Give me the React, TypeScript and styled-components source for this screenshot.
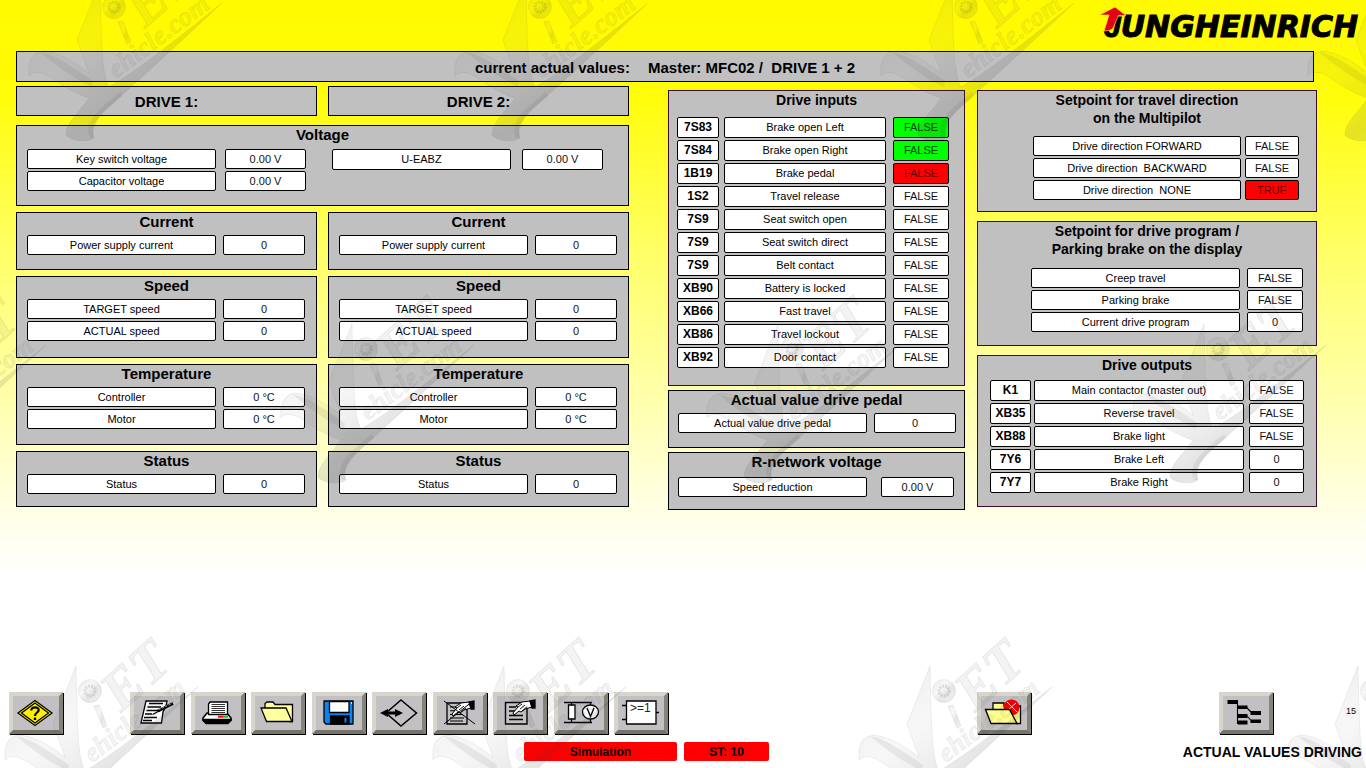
import React from 'react';
import styled, { createGlobalStyle } from 'styled-components';

const GlobalStyle = createGlobalStyle`
  *, *::before, *::after { box-sizing: border-box; }
  body {
    margin: 0;
    color: #000;
    font-family: "Liberation Sans", Arial, sans-serif;
    font-size: 11px;
  }
`;

const Page = styled.div`
  position: relative;
  display: flex;
  flex-direction: column;
  min-height: 100vh;
  overflow: hidden;
  padding-bottom: 7px;
  background: linear-gradient(#fffa00 0%, #fffc08 12%, #ffff70 35%, #ffffb4 54%, #ffffec 68%, #fff 76%);
`;

const Masthead = styled.header`
  display: flex;
  justify-content: flex-end;
  height: 51px;
  padding: 5px 4px 0 0;
`;

const TitleBar = styled.h1`
  display: flex;
  justify-content: center;
  gap: 18px;
  height: 31px;
  margin: 0 52px 4px 16px;
  border: 1px solid #000;
  background: #c0c0c0;
  font-size: 15px;
  line-height: 31px;
  white-space: pre;
`;

const Board = styled.main`
  display: grid;
  grid-template-columns: minmax(0, 641fr) minmax(0, 297fr) minmax(0, 342fr);
  column-gap: 11px;
  align-items: start;
  margin: 0 48px 40px 16px;
`;

const DriveArea = styled.div`
  display: grid;
  grid-template-columns: repeat(2, minmax(0, 1fr));
  gap: 6px 11px;
  padding-right: 28px;
`;

const SideColumn = styled.div<{ $gap: number; $inset?: number }>`
  display: flex;
  flex-direction: column;
  gap: ${(p) => p.$gap}px;
  padding: 4px ${(p) => p.$inset ?? 0}px 0;
`;

const DriveTitle = styled.h2`
  height: 30px;
  margin: 0 0 3px;
  border: 1px solid #000;
  background: #c0c0c0;
  font-size: 15px;
  line-height: 29px;
  text-align: center;
`;

const Panel = styled.section<{ $bottom: number; $wide?: boolean; $tint?: boolean }>`
  grid-column: ${(p) => (p.$wide ? '1 / -1' : 'auto')};
  padding-bottom: ${(p) => p.$bottom}px;
  border: 1px solid ${(p) => (p.$tint ? '#3a0a28' : '#000')};
  background: #c0c0c0;
`;

const PanelTitle = styled.h3<{ $gap: number; $small?: boolean }>`
  margin: 0 0 ${(p) => p.$gap}px;
  font-size: ${(p) => (p.$small ? 14 : 15)}px;
  line-height: 18px;
  text-align: center;
`;

const TablePair = styled.div`
  display: grid;
  grid-template-columns: 10fr 279fr 26fr 271fr 25fr;
  & > :first-child { grid-column: 2; }
  & > :last-child { grid-column: 4; }
`;

const Table = styled.table`
  display: block;
`;

const Body = styled.tbody<{ $gap: number }>`
  display: flex;
  flex-direction: column;
  gap: ${(p) => p.$gap}px;
`;

const Row = styled.tr<{ $columns: string }>`
  display: grid;
  grid-template-columns: ${(p) => p.$columns};
`;

const LabelCell = styled.th<{ $col: number; $h: number; $strong?: boolean }>`
  grid-column: ${(p) => p.$col};
  height: ${(p) => p.$h}px;
  padding: 0;
  border: 1px solid #000;
  border-radius: 2px;
  background: #fff;
  font-size: ${(p) => (p.$strong ? 12 : 11)}px;
  font-weight: ${(p) => (p.$strong ? 700 : 400)};
  line-height: ${(p) => p.$h - 2}px;
  text-align: center;
  white-space: pre;
`;

const tones = { plain: '#fff', green: '#00ff00', red: '#ff0000' };
type Tone = keyof typeof tones;

const ValueCell = styled.td<{ $col: number; $h: number; $tone: Tone }>`
  grid-column: ${(p) => p.$col};
  height: ${(p) => p.$h}px;
  padding: 0;
  border: 1px solid #000;
  border-radius: 2px;
  background: ${(p) => tones[p.$tone]};
  color: ${(p) => (p.$tone === 'red' ? '#600000' : p.$tone === 'green' ? '#004000' : '#111')};
  line-height: ${(p) => p.$h - 2}px;
  text-align: center;
`;

type Entry = { code?: string; label: string; value: string; tone?: Tone };

type ReadingsProps = { rows: Entry[]; columns: string; at: number[]; gap?: number; height?: number; name: string };

function Readings({ rows, columns, at, gap = 2, height = 20, name }: ReadingsProps) {
  const [labelCol, valueCol, codeCol = 0] = at;
  return (
    <Table aria-label={name}>
      <Body $gap={gap}>
        {rows.map((r, i) => (
          <Row key={i} $columns={columns}>
            {r.code && <LabelCell as="td" $strong $col={codeCol} $h={height}>{r.code}</LabelCell>}
            <LabelCell scope="row" $col={labelCol} $h={height}>{r.label}</LabelCell>
            <ValueCell $col={valueCol} $h={height} $tone={r.tone ?? 'plain'}>{r.value}</ValueCell>
          </Row>
        ))}
      </Body>
    </Table>
  );
}

const driveCols = '10fr 189fr 7fr 82fr 11fr';

const driveSections: { title: string; bottom: number; rows: Entry[] }[] = [
  { title: 'Current', bottom: 14, rows: [{ label: 'Power supply current', value: '0' }] },
  { title: 'Speed', bottom: 16, rows: [{ label: 'TARGET speed', value: '0' }, { label: 'ACTUAL speed', value: '0' }] },
  { title: 'Temperature', bottom: 15, rows: [{ label: 'Controller', value: '0 °C' }, { label: 'Motor', value: '0 °C' }] },
  { title: 'Status', bottom: 12, rows: [{ label: 'Status', value: '0' }] },
];

const inputs: Entry[] = [
  { code: '7S83', label: 'Brake open Left', value: 'FALSE', tone: 'green' },
  { code: '7S84', label: 'Brake open Right', value: 'FALSE', tone: 'green' },
  { code: '1B19', label: 'Brake pedal', value: 'FALSE', tone: 'red' },
  { code: '1S2', label: 'Travel release', value: 'FALSE' },
  { code: '7S9', label: 'Seat switch open', value: 'FALSE' },
  { code: '7S9', label: 'Seat switch direct', value: 'FALSE' },
  { code: '7S9', label: 'Belt contact', value: 'FALSE' },
  { code: 'XB90', label: 'Battery is locked', value: 'FALSE' },
  { code: 'XB66', label: 'Fast travel', value: 'FALSE' },
  { code: 'XB86', label: 'Travel lockout', value: 'FALSE' },
  { code: 'XB92', label: 'Door contact', value: 'FALSE' },
];

const outputs: Entry[] = [
  { code: 'K1', label: 'Main contactor (master out)', value: 'FALSE' },
  { code: 'XB35', label: 'Reverse travel', value: 'FALSE' },
  { code: 'XB88', label: 'Brake light', value: 'FALSE' },
  { code: '7Y6', label: 'Brake Left', value: '0' },
  { code: '7Y7', label: 'Brake Right', value: '0' },
];

/* ---------- bottom bar ---------- */

const Toolbar = styled.nav`
  display: grid;
  grid-template-columns: 121fr 847fr 242fr 127fr 20fr;
  align-items: center;
  margin-top: auto;
  padding-left: 9px;
`;

const ToolGroup = styled.div`
  display: flex;
  justify-content: space-between;
  width: 539px;
`;

const ToolButton = styled.button`
  width: 54px;
  height: 42px;
  margin: 0 1px 1px 0;
  padding: 0;
  border: 4px solid;
  border-color: #d8d6cc #85837a #75736a #d8d6cc;
  background: #c3c0c3;
  box-shadow: 1px 1px 0 #000;
  cursor: pointer;
  & > svg { display: block; }
`;

const PageNumber = styled.span`
  padding-bottom: 5px;
  font-size: 9px;
  line-height: 12px;
`;

const StatusRow = styled.footer`
  display: grid;
  grid-template-columns: minmax(0, 524fr) auto minmax(0, 597fr);
  align-items: center;
  margin-top: 7px;
`;

const Badges = styled.div`
  display: flex;
  gap: 7px;
  grid-column: 2;
`;

const Badge = styled.span<{ $w: number }>`
  width: ${(p) => p.$w}px;
  height: 19px;
  border-radius: 2px;
  background: #ff0000;
  font-size: 12px;
  font-weight: 700;
  line-height: 21px;
  text-align: center;
`;

const ScreenName = styled.strong`
  padding-right: 4px;
  font-size: 14px;
  line-height: 18px;
  text-align: right;
`;

const Icon = ({ children }: { children: React.ReactNode }) => (
  <svg width="46" height="34" viewBox="4 4 46 34" fill="none" stroke="#000" strokeWidth="1.3" aria-hidden="true">
    {children}
  </svg>
);

const Hand = ({ x, y }: { x: number; y: number }) => (
  <g transform={`translate(${x} ${y})`}>
    <path d="M0 13 L5 7 L3 6 L9 2 L17 1 L19 7 L12 9 L8 12 L6 11 L1 15 Z" fill="#fff" strokeWidth="1" />
    <path d="M5 7 L9 4 M7 9 L12 5 M9 11 L14 7" strokeWidth="0.9" />
    <path d="M17 1 L22 0 L22 8 L19 8 Z" fill="#000" />
  </g>
);

const HelpIcon = () => (
  <Icon>
    <path d="M26 8.5 L43 21 L26 33.5 L9 21 Z" fill="#ffee00" />
    <path d="M26 11 L39.5 21 L26 31 L12.5 21 Z" />
    <path d="M22.3 18.5 C22 14.5 29.7 14.3 29.7 18 C29.7 20.5 26 20.6 26 24" strokeWidth="2.2" />
    <path d="M26 25.6 V28" strokeWidth="2.4" />
  </Icon>
);

const NoteIcon = () => (
  <Icon>
    <path d="M16 9 H37 L36 14 L33 20 L31.5 31 H11 Z" fill="#fff" />
    <path d="M19 11.5 H33 M17.5 15 H31 M16.5 18.5 H28 M15 22 H22 M14 25.5 H27 M13 28.5 H22" strokeWidth="1.3" />
    <path d="M22.5 22.5 L30 18.5" strokeWidth="1.4" />
    <path d="M28 19 L43 11.5" strokeWidth="3" />
    <path d="M29 17.5 L42 11.5" stroke="#c3c0c3" strokeWidth="0.9" strokeDasharray="2 1.5" />
  </Icon>
);

const PrinterIcon = () => (
  <Icon>
    <path d="M12 26 L16 21 H36 L40 26 V28 H12 Z" fill="#fff" strokeWidth="1.6" />
    <path d="M17.5 22.5 V12 L19 10 H36.5 V22.5 Z" fill="#fff" />
    <path d="M20.5 12.5 H34 M20.5 14.5 H34 M20.5 16.5 H34 M20.5 18.5 H34 M20.5 20.5 H34" stroke="#333" strokeWidth="1" />
    <path d="M12 27.5 H40 V28.5 L37 31.5 H15 L12 28.5 Z" fill="#000" />
    <path d="M27 24.7 H32" stroke="#f00" strokeWidth="2" />
    <path d="M32 24.7 H37" stroke="#0c0" strokeWidth="2" />
  </Icon>
);

const FolderIcon = () => (
  <Icon>
    <path d="M14 16 V11.5 L16 10 H22 L24 12.5 H41.5 V29.5 H38" fill="#ffff9c" />
    <path d="M10 16 H35 L41 29.5 H15.5 Z" fill="#ffff9c" />
  </Icon>
);

const FloppyIcon = () => (
  <Icon>
    <path d="M12 9 H41 V32 H14 L12 30 Z" fill="#0a84f0" />
    <path d="M17.5 9.5 H37 V20.5 H17.5 Z" fill="#fff" />
    <path d="M18.5 24 H37 V32 H18.5 Z" fill="#000" />
    <path d="M32.5 26 H34.5 V30.5 H32.5 Z" fill="#0a84f0" stroke="none" />
    <path d="M39 11 H40" stroke="#fff" />
  </Icon>
);

const DiamondIcon = () => (
  <Icon>
    <path d="M29 8 L44.5 21 L29 34 L14 21 Z" strokeWidth="1.5" />
    <path d="M12 21 H28" strokeWidth="3" />
    <path d="M8 21 L16 17 V25 Z M31 21 L23 17 V25 Z" fill="#000" stroke="none" />
  </Icon>
);

const ClearIcon = () => (
  <Icon>
    <path d="M14 11 H34 V32 H14 Z" />
    <path d="M17 15 H26 M17 18.7 H24 M17 22.5 H30 M17 26 H31 M17 29 H30" strokeWidth="1.1" />
    <Hand x={19} y={9} />
    <path d="M11 9 L42 32 M40 9 L11 32" strokeWidth="1" />
  </Icon>
);

const EditIcon = () => (
  <Icon>
    <path d="M12.5 10.5 H34 V32 H12.5 Z" strokeWidth="1.4" />
    <path d="M16 15 H23 M16 19 H22 M16 23.5 H30 M16 27.5 H30" strokeWidth="1.3" />
    <Hand x={20} y={8} />
  </Icon>
);

const CircuitIcon = () => (
  <Icon>
    <path d="M10 10.5 H38 M10 30.5 H38 M17.5 10 V30.5 M36.5 10 V30.5" />
    <path d="M14.5 13 H21 V27 H14.5 Z" fill="#fff" />
    <ellipse cx="36.5" cy="20" rx="8" ry="7" fill="#fff" />
    <path d="M33 16 L36.5 24.5 L40 16" strokeWidth="1.4" />
  </Icon>
);

const GateIcon = () => (
  <Icon>
    <path d="M12.5 9 H42 V32 H12.5 Z" fill="#fff" />
    <path d="M8 13.5 H12 M8 27.5 H12 M42 20.5 H45" />
    <text x="16" y="20" fontFamily='"Liberation Sans", sans-serif' fontSize="12" fill="#222" stroke="none">{'>=1'}</text>
  </Icon>
);

const ReportIcon = () => (
  <Icon>
    <path d="M16 17 V11 H27 V14 H43.5 V31.5 H39" fill="#ffff8c" />
    <circle cx="34.5" cy="15.5" r="8" fill="#f00000" stroke="none" />
    <path d="M30 10 L40 20 M39 11 L32 17" stroke="#fff" strokeWidth="0.9" />
    <path d="M8.5 17.5 H32.5 L40 31.5 H14 Z" fill="#ffff8c" strokeWidth="1.4" />
  </Icon>
);

const TreeIcon = () => (
  <Icon>
    <path d="M8.5 8 H19 V12 H8.5 Z M19 13.5 H28.5 V17 H19 Z M31.5 19 H42 V23 H31.5 Z M19 22 H28.5 V26 H19 Z M31.5 27.5 H42 V31 H31.5 Z M19 28.5 H28.5 V32.5 H19 Z" fill="#000" stroke="none" />
    <path d="M18.5 10 V32 M28 16 L32 20 M28 24 L32 28.5" strokeWidth="1.1" />
  </Icon>
);

const tools = [
  { name: 'Notes', icon: <NoteIcon /> },
  { name: 'Print', icon: <PrinterIcon /> },
  { name: 'Open', icon: <FolderIcon /> },
  { name: 'Save', icon: <FloppyIcon /> },
  { name: 'Transfer', icon: <DiamondIcon /> },
  { name: 'Clear entry', icon: <ClearIcon /> },
  { name: 'Edit entry', icon: <EditIcon /> },
  { name: 'Measurement', icon: <CircuitIcon /> },
  { name: 'Logic', icon: <GateIcon /> },
];

/* ---------- logo and watermark ---------- */

const Logo = () => (
  <svg width="264" height="40" viewBox="0 0 264 40" role="img" aria-label="Jungheinrich">
    <text x="6" y="32" fontSize="30" fontWeight="700" fontStyle="italic" stroke="#000" strokeWidth="1">
      <tspan fontFamily='"Liberation Sans", sans-serif'>J</tspan>
      <tspan fontFamily='"DejaVu Sans", sans-serif'>UNGHEINRICH</tspan>
    </text>
    <path d="M1.5 10 L17 2 L28 10.5 L20.5 10.5 L15.5 22 Q14 26 6 26 L11 10 Z" fill="#e2001a" stroke="#fffa00" strokeWidth="0.6" />
  </svg>
);

const WatermarkLayer = styled.svg`
  position: absolute;
  inset: 0;
  width: 100%;
  height: 100%;
  pointer-events: none;
`;

const markSpots = [
  [28, -52], [454, -52], [880, -52], [1307, -52],
  [-148, 290], [280, 290], [706, 290], [1132, 290],
  [4, 632], [432, 632], [858, 632], [1286, 632],
];

const Watermark = () => (
  <WatermarkLayer aria-hidden="true">
    <defs>
      <linearGradient id="metal" x1="0" y1="0" x2="1" y2="1">
        <stop offset="0" stopColor="#444" stopOpacity="0.12" />
        <stop offset="0.35" stopColor="#666" stopOpacity="0.05" />
        <stop offset="0.6" stopColor="#333" stopOpacity="0.13" />
        <stop offset="1" stopColor="#555" stopOpacity="0.07" />
      </linearGradient>
      <symbol id="mark" viewBox="0 0 200 200" overflow="visible">
        <g fill="url(#metal)" stroke="#555" strokeOpacity="0.09" strokeWidth="1">
          <path d="M72 34 L49 92 L61 125 C45 113 30 104 15 103 C3 105 0 114 1 128 C5 122 15 124 24 130 C37 140 51 147 61 150 C51 165 38 174 38 187 C43 193 59 195 66 190 C62 181 66 173 77 162 C105 138 150 96 194 55 C155 86 112 121 81 139 C73 126 73 80 72 34 Z" />
          <circle cx="86" cy="59" r="11.5" />
          <path d="M90 74 L95 73 L103 94 L99 96 Z" />
        </g>
        <g fill="#555" fillOpacity="0.07" stroke="#444" strokeOpacity="0.09" strokeWidth="1" fontFamily='"Liberation Serif", serif' fontStyle="italic" fontWeight="700">
          <text transform="translate(117 81) rotate(-42)" fontSize="56">ET</text>
          <text transform="translate(88 131) rotate(-37)" fontSize="27">ehicle.com</text>
        </g>
        <circle cx="86" cy="59" r="5" fill="none" stroke="#444" strokeOpacity="0.15" strokeWidth="3" strokeDasharray="2 1" />
        <path d="M12 104 C32 108 48 122 65 133 L64 139 C45 130 26 116 12 104 Z M62 190 C55 174 70 162 92 144 L94 148 C75 164 64 174 66 190 Z" fill="#333" fillOpacity="0.08" />
      </symbol>
    </defs>
    {markSpots.map(([x, y]) => (
      <use key={`${x}:${y}`} href="#mark" x={x} y={y} width="200" height="200" />
    ))}
  </WatermarkLayer>
);

export default function App() {
  return (
    <Page>
      <GlobalStyle />
      <Masthead><Logo /></Masthead>
      <TitleBar>
        <span>current actual values:</span>
        <span>{'Master: MFC02 /  DRIVE 1 + 2'}</span>
      </TitleBar>

      <Board>
        <DriveArea>
          <DriveTitle>DRIVE 1:</DriveTitle>
          <DriveTitle>DRIVE 2:</DriveTitle>
          <Panel $wide $bottom={14}>
            <PanelTitle $gap={5}>Voltage</PanelTitle>
            <TablePair>
              <Readings
                name="Supply voltage"
                columns="189fr 9fr 81fr"
                at={[1, 3]}
                rows={[{ label: 'Key switch voltage', value: '0.00 V' }, { label: 'Capacitor voltage', value: '0.00 V' }]}
              />
              <Readings name="U-EABZ voltage" columns="179fr 11fr 81fr" at={[1, 3]} height={21} rows={[{ label: 'U-EABZ', value: '0.00 V' }]} />
            </TablePair>
          </Panel>
          {driveSections.flatMap((s) =>
            [1, 2].map((drive) => (
              <Panel key={`${s.title}${drive}`} $bottom={s.bottom}>
                <PanelTitle $gap={4}>{s.title}</PanelTitle>
                <Readings name={`${s.title}, drive ${drive}`} columns={driveCols} at={[2, 4]} rows={s.rows} />
              </Panel>
            )),
          )}
        </DriveArea>

        <SideColumn $gap={4}>
          <Panel $tint $bottom={17}>
            <PanelTitle $small $gap={8}>Drive inputs</PanelTitle>
            <Readings name="Drive inputs" columns="8fr 42fr 5fr 162fr 7fr 56fr 15fr" at={[4, 6, 2]} height={21} rows={inputs} />
          </Panel>
          <Panel $bottom={14}>
            <PanelTitle $gap={4}>Actual value drive pedal</PanelTitle>
            <Readings name="Drive pedal" columns="9fr 189fr 7fr 82fr 8fr" at={[2, 4]} rows={[{ label: 'Actual value drive pedal', value: '0' }]} />
          </Panel>
          <Panel $bottom={12}>
            <PanelTitle $gap={6}>R-network voltage</PanelTitle>
            <Readings name="R-network" columns="9fr 189fr 14fr 73fr 10fr" at={[2, 4]} rows={[{ label: 'Speed reduction', value: '0.00 V' }]} />
          </Panel>
        </SideColumn>

        <SideColumn $gap={9} $inset={1}>
          <Panel $tint $bottom={11}>
            <PanelTitle $small $gap={9}>Setpoint for travel direction<br />on the Multipilot</PanelTitle>
            <Readings
              name="Travel direction"
              columns="55fr 208fr 4fr 54fr 17fr"
              at={[2, 4]}
              rows={[
                { label: 'Drive direction FORWARD', value: 'FALSE' },
                { label: 'Drive direction  BACKWARD', value: 'FALSE' },
                { label: 'Drive direction  NONE', value: 'TRUE', tone: 'red' },
              ]}
            />
          </Panel>
          <Panel $tint $bottom={13}>
            <PanelTitle $small $gap={10}>Setpoint for drive program /<br />Parking brake on the display</PanelTitle>
            <Readings
              name="Drive program"
              columns="53fr 209fr 7fr 56fr 13fr"
              at={[2, 4]}
              rows={[
                { label: 'Creep travel', value: 'FALSE' },
                { label: 'Parking brake', value: 'FALSE' },
                { label: 'Current drive program', value: '0' },
              ]}
            />
          </Panel>
          <Panel $tint $bottom={13}>
            <PanelTitle $small $gap={6}>Drive outputs</PanelTitle>
            <Readings name="Drive outputs" columns="12fr 41fr 3fr 210fr 5fr 55fr 12fr" at={[4, 6, 2]} height={21} rows={outputs} />
          </Panel>
        </SideColumn>
      </Board>

      <Toolbar aria-label="Functions">
        <div><ToolButton type="button" aria-label="Help"><HelpIcon /></ToolButton></div>
        <ToolGroup>
          {tools.map((t) => (
            <ToolButton key={t.name} type="button" aria-label={t.name}>{t.icon}</ToolButton>
          ))}
        </ToolGroup>
        <div><ToolButton type="button" aria-label="Fault report"><ReportIcon /></ToolButton></div>
        <div><ToolButton type="button" aria-label="Menu tree"><TreeIcon /></ToolButton></div>
        <PageNumber>15</PageNumber>
      </Toolbar>

      <StatusRow>
        <Badges>
          <Badge $w={153}>Simulation</Badge>
          <Badge $w={85}>ST: 10</Badge>
        </Badges>
        <ScreenName>ACTUAL VALUES DRIVING</ScreenName>
      </StatusRow>
      <Watermark />
    </Page>
  );
}
